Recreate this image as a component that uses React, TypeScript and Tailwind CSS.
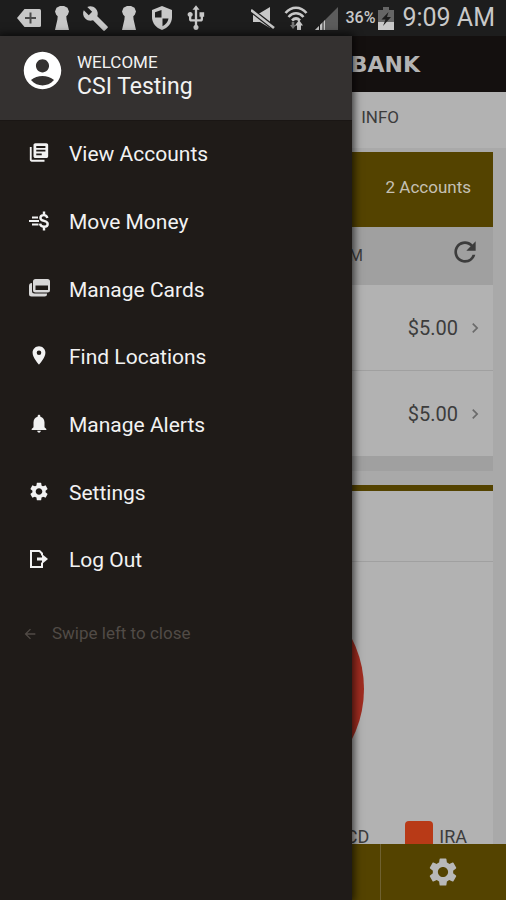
import {
    MdAccountCircle,
    MdArrowBack,
    MdBuild,
    MdChevronRight,
    MdLibraryBooks,
    MdNotifications,
    MdPlace,
    MdRefresh,
    MdSettings,
    MdUsb,
} from "react-icons/md";

function KeyholeIcon() {
    return (
        <svg viewBox="0 0 14 24" className="h-6 w-[14px]" fill="currentColor">
            <path d="M5 0h4l3.500 1.800L14 5.500l-1.200 3.200-1.500 1.600.3 3.200L14 24H0L2.400 13.500l.3-3.200-1.500-1.600L0 5.500l1.500-3.700z" />
        </svg>
    );
}

function StatusBar() {
    return (
        <header className="flex h-9 shrink-0 items-center justify-between bg-[#1d1d1d] pr-[11px] pl-[17px] text-[#c8c8c8]">
            <div className="flex items-center">
                <svg viewBox="0 0 24 18" className="h-[18px] w-6" fill="currentColor">
                    <path d="M7.500 0H22.500a1.500 1.500 0 0 1 1.500 1.500v15a1.500 1.500 0 0 1-1.500 1.500H7.500L0 9z" />
                    <path d="M13.500 3.500v11M8 9h11" stroke="#4a4a4a" strokeWidth="2" />
                </svg>
                <span className="ml-[14px]"><KeyholeIcon /></span>
                <MdBuild className="ml-[13px] size-[27px]" />
                <span className="ml-[13px]"><KeyholeIcon /></span>
                {/* Shield */}
                <svg viewBox="0 0 20 24" className="ml-4 h-6 w-5">
                    <path d="M10 0l10 4v7c0 6-4 11-10 13C4 22 0 17 0 11V4z" fill="#c8c8c8" />
                    <path d="M9.500 4v7.500H3V6.300z" fill="#1d1d1d" />
                    <path d="M10.500 12.500H16.500c-.6 3.500-2.700 6-6 7.700z" fill="#1d1d1d" />
                </svg>
                <MdUsb className="ml-[10px] size-[28px]" />
            </div>

            <div className="flex items-center">
                {/* Muted speaker */}
                <svg viewBox="0 0 24 22" className="h-[22px] w-6">
                    <path d="M2 6h7l10-6v21l-10-6H2z" fill="#c8c8c8" />
                    <path d="M0 3l23 18" stroke="#1d1d1d" strokeWidth="5" />
                    <path d="M0 3l23 18" stroke="#c8c8c8" strokeWidth="2.600" />
                </svg>
                {/* Wifi with traffic arrows */}
                <svg viewBox="0 0 24 24" className="ml-[9px] size-6" fill="none" stroke="currentColor" strokeWidth="2.600">
                    <path d="M1.500 7C7.500 0 16.500 0 22.500 7M4.500 11c4.500-5 10.500-5 15 0M8 14.500c2.500-2.500 5.500-2.500 8 0" />
                    <path d="M9 16v5" stroke="#777" />
                    <path d="M6 19h6l-3 4z" fill="#777" stroke="none" />
                    <path d="M15 24v-5" strokeWidth="4" />
                    <path d="M11 19.500h8L15 14z" fill="currentColor" stroke="none" />
                </svg>
                {/* Signal strength */}
                <svg viewBox="0 0 23 23" className="ml-[7px] size-[23px]">
                    <path d="M23 0v23H0z" fill="#5c5c5c" />
                    <path d="M10 13v10H0z" fill="#c8c8c8" />
                    <path d="M4.500 17v6M8 14v9" stroke="#1d1d1d" />
                </svg>
                <span className="ml-[7px] text-base font-medium">36%</span>
                {/* Battery */}
                <svg viewBox="0 0 16 23" className="ml-[3px] h-[23px] w-4">
                    <path d="M5 0h6v3h5v20H0V3h5z" fill="#666" />
                    <path d="M0 15h16v8H0z" fill="#c8c8c8" />
                    <path d="M10.500 5L3.500 12.500h4L5 19l8-9H9z" fill="#1d1d1d" />
                </svg>
                <span className="ml-2 text-[25px]">9:09 AM</span>
            </div>
        </header>
    );
}

function MoveMoneyIcon() {
    return (
        <svg viewBox="0 0 20 20" className="size-5" fill="none" stroke="currentColor" strokeWidth="2.400">
            <path d="M18.300 7c-.3-1.900-1.500-2.900-3.500-2.900-2.200 0-3.400 1.100-3.400 2.800 0 3.900 7.300 2.200 7.300 6 0 1.700-1.400 2.800-3.700 2.800-2.300 0-3.700-1.100-3.900-3M15 .5V4M15 15.700v3.800" />
            <path d="M3 6.500h6M0 10h10M3 13.500h6.500" strokeWidth="2" />
        </svg>
    );
}

function CardsIcon() {
    return (
        <svg viewBox="0 0 22 20" className="h-5 w-[22px]" fill="#d8d8d8">
            <path
                fillRule="evenodd"
                d="M7.500 1H19.500a2.500 2.500 0 0 1 2.500 2.500v8.500a2.500 2.500 0 0 1-2.500 2.500H7.500a2.500 2.500 0 0 1-2.500-2.500V3.500A2.500 2.500 0 0 1 7.500 1zM7.500 7.500V12H20V7.500z"
            />
            <path d="M4 5v8a2.500 2.500 0 0 0 2.500 2.500H19V16a2.500 2.500 0 0 1-2.500 2.500H3.500A2.500 2.500 0 0 1 1 16V8a3 3 0 0 1 3-3z" />
        </svg>
    );
}

function LogOutIcon() {
    return (
        <svg viewBox="0 0 20 20" className="size-5" fill="none" stroke="currentColor" strokeWidth="2">
            <path d="M13 6.500V4.500L10.500 2H2v16h11v-4.500" />
            <path d="M8 10H15" strokeWidth="3" />
            <path d="M13 5l6 5-6 5z" fill="currentColor" stroke="none" />
        </svg>
    );
}

const menuItems = [
    { label: "View Accounts", icon: <MdLibraryBooks className="size-[23px]" /> },
    { label: "Move Money", icon: <MoveMoneyIcon /> },
    { label: "Manage Cards", icon: <CardsIcon /> },
    { label: "Find Locations", icon: <MdPlace className="size-[23px]" /> },
    { label: "Manage Alerts", icon: <MdNotifications className="size-[23px]" /> },
    { label: "Settings", icon: <MdSettings className="size-[23px]" /> },
    { label: "Log Out", icon: <LogOutIcon /> },
];

function Drawer() {
    return (
        <aside className="absolute inset-y-0 left-0 w-4/5 max-w-[352px] bg-[#1f1b18] text-[#f2f2f2] shadow-[0_0_8px_2px_rgba(0,0,0,0.7)]">
            <div className="flex h-[85px] items-start gap-3 border-b border-[#1a1614] bg-[#343130] pt-3 pl-5">
                <MdAccountCircle className="size-[45px] text-white" />
                <div className="pt-[2px]">
                    <p className="text-[17px] leading-6">WELCOME</p>
                    <p className="text-[23px] leading-[26px]">CSI Testing</p>
                </div>
            </div>

            <nav>
                <ul className="grid h-[474px] grid-rows-7">
                    {menuItems.map((item) => (
                        <li key={item.label}>
                            <a href="#" className="flex h-full items-center pl-7 text-[21px]">
                                <span className="flex w-[22px] justify-center pb-1">{item.icon}</span>
                                <span className="ml-[19px]">{item.label}</span>
                            </a>
                        </li>
                    ))}
                </ul>
            </nav>

            <p className="flex h-[77px] items-center pl-[22px] text-[17px] text-[#514b46]">
                <MdArrowBack className="mr-[14px] size-4" />
                Swipe left to close
            </p>
        </aside>
    );
}

function AccountRow({ amount }: { amount: string }) {
    return (
        <a href="#" className="flex h-[86px] items-center justify-end border-b border-[#a0a0a0] pr-2 text-xl">
            {amount}
            <MdChevronRight className="ml-[7px] size-5 text-[#6b6b6b]" />
        </a>
    );
}

function AccountsPage() {
    return (
        <main className="min-h-0 flex-1 overflow-hidden bg-[#a9a9a9] text-[#3c3c3c]">
            <div className="flex h-14 items-center justify-end bg-[#14100f] pr-[86px] font-['DejaVu_Sans',sans-serif] text-[22px] font-bold text-[#b4b4b4]">
                BANK
            </div>
            <div className="flex h-[56px] items-center justify-end bg-[#b2b2b2] pr-[107px] pb-1">
                <a href="#" className="text-[17px]">INFO</a>
            </div>

            {/* Accounts */}
            <section className="mx-[13px] mt-1 bg-[#b2b2b2]">
                <div className="flex h-[75px] items-center justify-end bg-[#544300] pr-[22px] pb-1 text-[17px] text-[#c4c0b4]">
                    2 Accounts
                </div>
                <div className="flex h-[58px] items-center justify-end bg-[#a0a0a0] pr-3">
                    <span className="text-base">M</span>
                    <button type="button" aria-label="Refresh" className="ml-[86px] pb-2">
                        <MdRefresh className="size-8" />
                    </button>
                </div>
                <AccountRow amount="$5.00" />
                <AccountRow amount="$5.00" />
                <div className="h-[14px] bg-[#a0a0a0]"></div>
            </section>

            {/* Chart */}
            <section className="mx-[13px] mt-[14px] border-t-[6px] border-[#544300] bg-[#b2b2b2]">
                <div className="h-[71px] border-b border-[#a0a0a0]"></div>
                <svg viewBox="0 0 204 204" className="mx-auto mt-4 size-[222px]">
                    <circle cx="102" cy="102" r="102" fill="#9f2c20" />
                </svg>
                <div className="mt-[21px] flex h-[60px] items-start justify-end pr-[26px] text-lg">
                    <span className="pt-[2px]">CD</span>
                    <span className="ml-9 size-7 rounded bg-[#b83a17]"></span>
                    <span className="ml-[6px] pt-[2px]">IRA</span>
                </div>
            </section>
        </main>
    );
}

export default function App() {
    return (
        <div className="flex h-screen flex-col overflow-hidden font-[Roboto,sans-serif]">
            <StatusBar />
            <div className="relative flex min-h-0 flex-1 flex-col">
                <AccountsPage />
                <footer className="grid h-14 shrink-0 grid-cols-4 bg-[#544300]">
                    <button
                        type="button"
                        aria-label="Settings"
                        className="col-start-4 flex items-center justify-center border-l border-[#6f6130] text-[#b8b8b8]"
                    >
                        <MdSettings className="size-[34px]" />
                    </button>
                </footer>
                <Drawer />
            </div>
        </div>
    );
}
